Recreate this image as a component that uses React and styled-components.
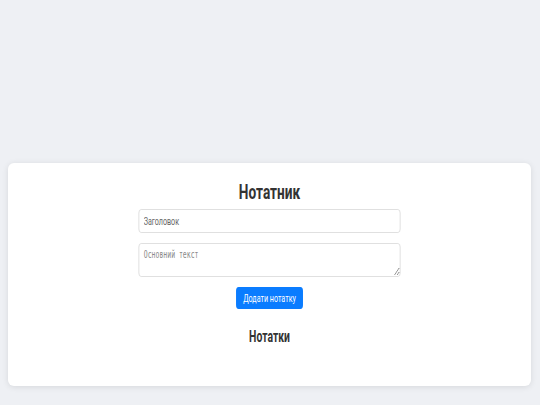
import React from "react";
import styled, { createGlobalStyle } from "styled-components";

// the reference renders everything narrow, so the content column is squeezed horizontally
const SQUEEZE = 0.65;

const GlobalStyle = createGlobalStyle`
  html, body {
    margin: 0;
    padding: 0;
    background: #eef0f4;
    font-family: Roboto, "Liberation Sans", sans-serif;
  }
`;

const Page = styled.div`
  min-height: 405px;
  display: flex;
  flex-direction: column;
  justify-content: flex-end;
  padding: 0 9px 19px 8px;
  box-sizing: border-box;
`;

const Card = styled.div`
  background: #fff;
  border-radius: 6px;
  box-shadow: 0 1px 6px rgba(0, 0, 0, 0.1);
  padding: 17px 0 39px;
  display: flex;
  justify-content: center;
`;

const Content = styled.div`
  width: ${(p) => p.width / SQUEEZE}px;
  margin: 0 ${(p) => -(p.width / SQUEEZE - p.width) / 2}px;
  transform: scaleX(${SQUEEZE});
  display: flex;
  flex-direction: column;
  align-items: center;
`;

const Title = styled.h1`
  margin: 0 0 5px;
  font-size: 21px;
  line-height: 24px;
  font-weight: bold;
  color: #333;
`;

const Form = styled.form`
  width: 100%;
  display: flex;
  flex-direction: column;
  align-items: center;
  gap: 10px;
`;

const Input = styled.input`
  width: 100%;
  box-sizing: border-box;
  height: 24px;
  border: 1px solid #d9d9d9;
  border-radius: 4px;
  padding: 0 7px;
  font-family: inherit;
  font-size: 11px;
  color: #333;
  &::placeholder { color: #666; }
`;

const TextArea = styled.textarea`
  width: 100%;
  box-sizing: border-box;
  height: 34px;
  border: 1px solid #d9d9d9;
  border-radius: 4px;
  padding: 5px 7px;
  font-family: "DejaVu Sans Mono", monospace;
  font-size: 10px;
  &::placeholder { color: #888; }
`;

const Button = styled.button`
  background: #0a7cff;
  color: #fff;
  border: none;
  border-radius: 4px;
  height: 22px;
  padding: 0 11px;
  font-family: inherit;
  font-size: 11px;
`;

const SubTitle = styled.h2`
  margin: 18px 0 0;
  font-size: 16px;
  line-height: 20px;
  font-weight: bold;
  color: #333;
`;

export default function App() {
  return (
    <>
      <GlobalStyle />
      <Page>
        <Card>
          <Content width={262}>
            <Title>Нотатник</Title>
            <Form onSubmit={(e) => e.preventDefault()}>
              <Input placeholder="Заголовок" />
              <TextArea placeholder="Основний текст" />
              <Button type="submit">Додати нотатку</Button>
            </Form>
            <SubTitle>Нотатки</SubTitle>
          </Content>
        </Card>
      </Page>
    </>
  );
}
